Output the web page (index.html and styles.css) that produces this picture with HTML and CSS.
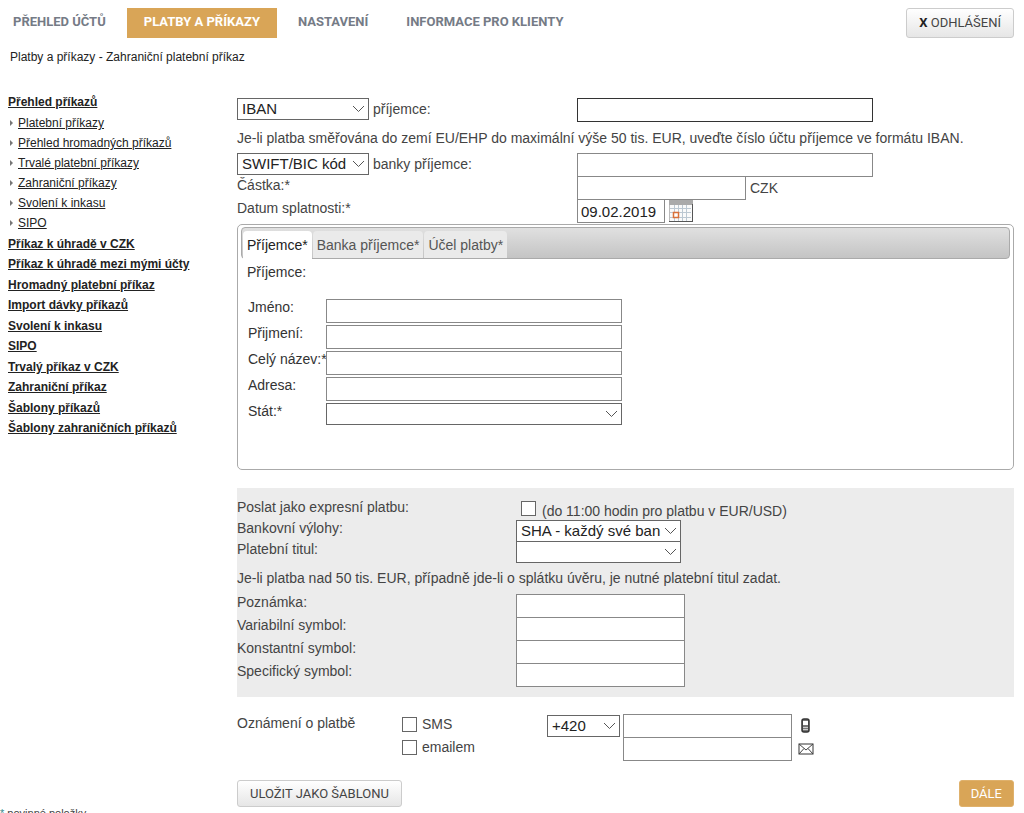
FILE: index.html
```html
<!DOCTYPE html>
<html lang="cs">
<head>
<meta charset="utf-8">
<title>Zahraniční platební příkaz</title>
<link rel="stylesheet" href="styles.css">
</head>
<body>
<svg class="defs" aria-hidden="true">
  <symbol id="chevron" viewBox="0 0 13 8"><path d="M1 1l5.500 5.500L12 1" fill="none" stroke="#555" stroke-width="1"/></symbol>
</svg>
<header class="top">
  <nav class="main-nav">
    <a href="#">PŘEHLED ÚČTŮ</a>
    <a href="#" class="current">PLATBY A PŘÍKAZY</a>
    <a href="#">NASTAVENÍ</a>
    <a href="#">INFORMACE PRO KLIENTY</a>
  </nav>
  <button type="button" class="btn logout"><b>X</b> ODHLÁŠENÍ</button>
</header>
<p class="crumbs">Platby a příkazy - Zahraniční platební příkaz</p>
<div class="layout">
  <nav class="side">
    <div class="group">
      <a href="#">Přehled příkazů</a>
      <ul>
        <li><a href="#">Platební příkazy</a></li>
        <li><a href="#">Přehled hromadných příkazů</a></li>
        <li><a href="#">Trvalé platební příkazy</a></li>
        <li><a href="#">Zahraniční příkazy</a></li>
        <li><a href="#">Svolení k inkasu</a></li>
        <li><a href="#">SIPO</a></li>
      </ul>
    </div>
    <div class="group">
      <a href="#">Příkaz k úhradě v CZK</a>
      <a href="#">Příkaz k úhradě mezi mými účty</a>
    </div>
    <div class="group">
      <a href="#">Hromadný platební příkaz</a>
      <a href="#">Import dávky příkazů</a>
    </div>
    <div class="group">
      <a href="#">Svolení k inkasu</a>
      <a href="#">SIPO</a>
    </div>
    <div class="group">
      <a href="#">Trvalý příkaz v CZK</a>
      <a href="#">Zahraniční příkaz</a>
    </div>
    <div class="group">
      <a href="#">Šablony příkazů</a>
      <a href="#">Šablony zahraničních příkazů</a>
    </div>
  </nav>
  <main>
    <form>
      <div class="row">
        <div class="pick">
          <span class="select w-type"><select id="acc-type" aria-label="Typ účtu"><option>IBAN</option></select><svg><use href="#chevron"/></svg></span>
          <label for="acc">příjemce:</label>
        </div>
        <input type="text" id="acc" class="wide strong">
      </div>
      <p class="note">Je-li platba směřována do zemí EU/EHP do maximální výše 50 tis. EUR, uveďte číslo účtu příjemce ve formátu IBAN.</p>
      <div class="row">
        <div class="pick">
          <span class="select w-type"><select id="bank-type" aria-label="Typ kódu banky"><option>SWIFT/BIC kód</option></select><svg><use href="#chevron"/></svg></span>
          <label for="bank">banky příjemce:</label>
        </div>
        <input type="text" id="bank" class="wide">
      </div>
      <div class="row text-row">
        <label for="amount">Částka:*</label>
        <div class="inline"><input type="text" id="amount" class="mid"><span>CZK</span></div>
      </div>
      <div class="row text-row">
        <label for="due">Datum splatnosti:*</label>
        <div class="inline"><input type="text" id="due" class="date" value="09.02.2019">
          <button type="button" class="cal" aria-label="Kalendář"><svg width="24" height="22" viewBox="0 0 24 22">
            <rect width="24" height="22" fill="#fafafa"/>
            <path d="M5.500 5v16M9.500 5v16M13.500 5v16M17.500 5v16M1 8.500h21M1 12.500h21M1 17.500h21" stroke="#bcc8d2"/>
            <rect width="24" height="5" fill="#aaa"/>
            <rect x="4.500" y="12.500" width="5" height="5" fill="#fff" stroke="#d9713a" stroke-width="1.500"/>
            <path d="M.5 5v17" stroke="#bbb"/>
            <path d="M0 21.500h24M23.500 4v18" stroke="#555" fill="none"/>
          </svg></button></div>
      </div>

      <section class="panel">
        <div class="tabs" role="tablist">
          <button type="button" role="tab" aria-selected="true">Příjemce*</button>
          <button type="button" role="tab" aria-selected="false">Banka příjemce*</button>
          <button type="button" role="tab" aria-selected="false">Účel platby*</button>
        </div>
        <div class="tab-body">
          <p>Příjemce:</p>
          <div class="person">
            <label for="first">Jméno:</label><input type="text" id="first" class="wide">
            <label for="last">Přijmení:</label><input type="text" id="last" class="wide">
            <label for="full">Celý název:*</label><input type="text" id="full" class="wide">
            <label for="addr">Adresa:</label><input type="text" id="addr" class="wide">
            <label for="state">Stát:*</label><span class="select w-state"><select id="state"><option></option></select><svg><use href="#chevron"/></svg></span>
          </div>
        </div>
      </section>

      <section class="details">
        <div class="drow short">
          <label for="express">Poslat jako expresní platbu:</label>
          <div class="express"><input type="checkbox" id="express"><span>(do 11:00 hodin pro platbu v EUR/USD)</span></div>
        </div>
        <div class="drow short">
          <label for="fees">Bankovní výlohy:</label>
          <span class="select w-fees"><select id="fees"><option>SHA - každý své ban</option></select><svg><use href="#chevron"/></svg></span>
        </div>
        <div class="drow short">
          <label for="title">Platební titul:</label>
          <span class="select w-fees"><select id="title"><option></option></select><svg><use href="#chevron"/></svg></span>
        </div>
        <p class="note">Je-li platba nad 50 tis. EUR, případně jde-li o splátku úvěru, je nutné platební titul zadat.</p>
        <div class="drow"><label for="memo">Poznámka:</label><input type="text" id="memo" class="mid"></div>
        <div class="drow"><label for="vs">Variabilní symbol:</label><input type="text" id="vs" class="mid"></div>
        <div class="drow"><label for="ks">Konstantní symbol:</label><input type="text" id="ks" class="mid"></div>
        <div class="drow"><label for="ss">Specifický symbol:</label><input type="text" id="ss" class="mid"></div>
      </section>

      <section class="notify">
        <span class="caption">Oznámení o platbě</span>
        <div class="checks">
          <label><input type="checkbox"> SMS</label>
          <label><input type="checkbox"> emailem</label>
        </div>
        <span class="select w-code"><select aria-label="Předvolba"><option>+420</option></select><svg><use href="#chevron"/></svg></span>
        <div class="contacts">
          <div class="inline"><input type="text" class="mid" aria-label="Telefon">
            <svg width="16" height="16" viewBox="0 0 16 16"><rect x="4" y="1" width="7" height="13" rx="2" fill="#777" stroke="#333" stroke-width="1.500"/><rect x="5" y="3" width="5" height="4" fill="#fff"/><path d="M5 9.500h5M5 11.500h5" stroke="#ccc"/></svg></div>
          <div class="inline"><input type="text" class="mid" aria-label="E-mail">
            <svg width="16" height="12" viewBox="0 0 16 12"><rect x="1" y="1" width="14" height="10" fill="#fff" stroke="#333"/><path d="M1 1l7 6 7-6M1 11l5-5.500M15 11l-5-5.500" fill="none" stroke="#444"/></svg></div>
        </div>
      </section>

      <div class="actions">
        <button type="button" class="btn">ULOŽIT JAKO ŠABLONU</button>
        <button type="submit" class="btn primary">DÁLE</button>
      </div>
    </form>
  </main>
</div>
<p class="required"><span>*</span> povinné položky</p>
</body>
</html>
```
FILE: styles.css
```css
* { box-sizing: border-box; }
body {
  margin: 0;
  height: 100vh;
  overflow: hidden;
  background: #fff;
  color: #444;
  font: 14px/16px "Liberation Sans", Arial, sans-serif;
}
p { margin: 0; }
.defs { display: none; }

.top {
  display: flex;
  justify-content: space-between;
  align-items: flex-start;
  padding: 8px 10px 0 13px;
}
.main-nav { display: flex; gap: 4px; }
.main-nav a {
  padding: 0 17px;
  font: bold 13px/28px Roboto, sans-serif;
  color: #757b86;
  text-decoration: none;
  height: 30px;
}
.main-nav a:first-child { padding-left: 0; }
.main-nav .current { background: #d9a557; color: #fff; }

.btn {
  height: 27px;
  padding: 0 12px;
  border: 1px solid #ccc;
  border-radius: 3px;
  background: linear-gradient(#fff, #e6e6e6);
  color: #444;
  font: 13px/16px Roboto, sans-serif;
}
.logout { height: 30px; }
.logout b { color: #222; }
.primary { padding: 0 11px; background: #d9a557; border-color: #dfb16c; color: #fff; }

.crumbs {
  padding: 11px 10px 0;
  font-size: 12px;
  color: #222;
}

.layout { display: flex; padding: 33px 10px 0 8px; }
.side {
  flex: 0 0 229px;
  margin-top: -6px;
  display: flex;
  flex-direction: column;
  gap: 1px;
  font-size: 12px;
  line-height: 20px;
}
.side a { color: #222; }
.side .group > a { display: block; font-weight: bold; }
.side ul { list-style: none; margin: 1px 0 0; padding: 0; }
.side li { display: flex; align-items: center; gap: 5px; padding-left: 2px; }
.side li::before {
  content: "";
  width: 3px;
  height: 6px;
  background: #777;
  clip-path: polygon(0 0, 100% 50%, 0 100%);
}
main { flex: 1; min-width: 0; }

input, select { font: 15px/18px "Liberation Sans", Arial, sans-serif; color: #222; margin: 0; }
input[type="text"] {
  height: 24px;
  padding: 0 3px;
  border: 1px solid #888;
  border-radius: 0;
  background: #fff;
}
input.strong { border-color: #333; }
.wide { width: 296px; }
.mid { width: 169px; }
.date { width: 88px; }
input[type="checkbox"] {
  appearance: none;
  width: 15px;
  height: 15px;
  border: 1px solid #666;
  background: #fff;
}

.select { position: relative; display: block; height: 22px; }
.select select {
  appearance: none;
  display: block;
  width: 100%;
  height: 100%;
  padding: 0 18px 0 4px;
  border: 1px solid #666;
  border-radius: 0;
  background: #fff;
}
.select svg {
  position: absolute;
  right: 4px;
  top: 7px;
  width: 13px;
  height: 8px;
  pointer-events: none;
}
.w-type { width: 132px; }
.w-state { width: 296px; }
.w-fees { width: 165px; }
.w-code { width: 73px; }

.row { display: grid; grid-template-columns: 340px 1fr; height: 23px; }
.text-row label { padding-top: 1px; }
.pick { display: flex; align-items: center; gap: 4px; height: 22px; }
.inline { display: flex; align-items: center; gap: 4px; height: 24px; }
.note { padding: 9px 0 7px; }

.cal { display: flex; padding: 0; border: 0; background: none; }

.panel {
  margin-top: 2px;
  padding: 2px 3px;
  min-height: 246px;
  border: 1px solid #aaa;
  border-radius: 5px;
}
.tabs {
  display: flex;
  align-items: flex-end;
  gap: 1px;
  height: 32px;
  padding: 0 1px;
  border: 1px solid #aaa;
  border-radius: 4px;
  background: linear-gradient(#e0e0e0, #c4c4c4);
}
.tabs button {
  height: 27px;
  padding: 0 4px;
  border: 0;
  border-radius: 4px 4px 0 0;
  background: #eaeaea;
  color: #555;
  font: 14px/16px "Liberation Sans", Arial, sans-serif;
}
.tabs button[aria-selected="true"] { background: #fff; color: #222; height: 28px; margin-bottom: -1px; }
.tab-body { padding: 5px 6px; color: #333; }
.person {
  display: grid;
  grid-template-columns: 78px auto;
  justify-content: start;
  row-gap: 2px;
  padding: 19px 0 0 1px;
  white-space: nowrap;
}

.details {
  margin-top: 18px;
  padding: 11px 0;
  background: #ececec;
}
.drow { display: grid; grid-template-columns: 279px 1fr; height: 23px; }
.drow.short { height: 21px; }
.express { display: flex; gap: 6px; padding: 2px 0 0 5px; }
.express span { padding-top: 2px; }
.details .note { padding: 8px 0; }

.notify { display: flex; padding-top: 17px; }
.caption { width: 165px; padding-top: 1px; }
.checks { width: 145px; }
.checks label { display: flex; align-items: center; gap: 5px; height: 20px; margin-bottom: 3px; }
.notify .w-code { margin-top: 1px; }
.contacts { margin-left: 3px; }
.contacts .inline { height: 23px; gap: 6px; }

.actions { display: flex; justify-content: space-between; align-items: center; padding-top: 20px; }
.required { font-size: 11px; line-height: 12px; }
.required span { color: #3a8a8a; }
```
